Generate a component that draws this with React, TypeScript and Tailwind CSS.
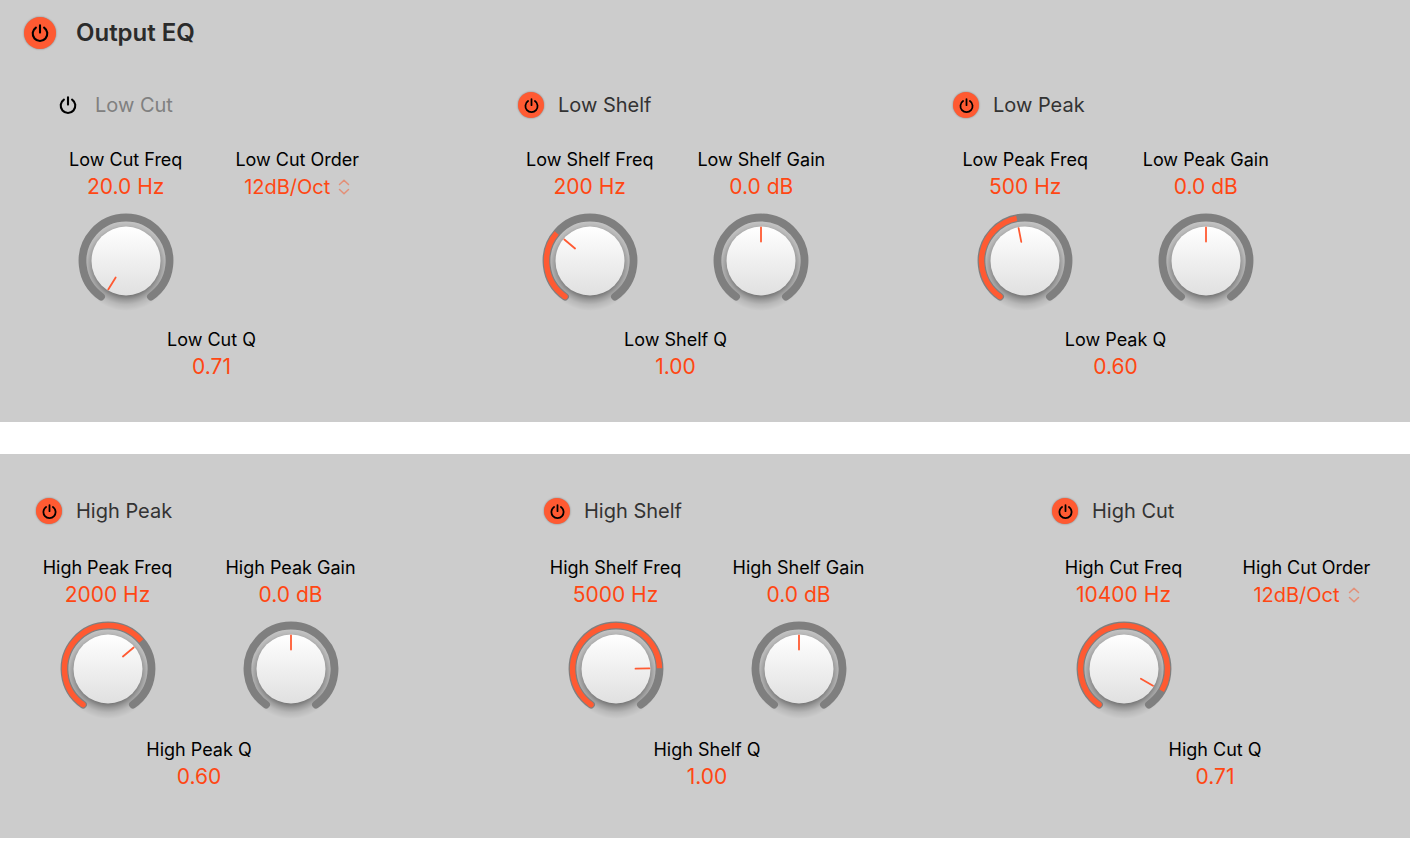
import React, { useState } from 'react';
import clsx from 'clsx';

type KnobParam = { kind: 'knob'; label: string; value: string; angle: number };
type MenuParam = { kind: 'menu'; label: string; options: string[] };
type Param = KnobParam | MenuParam;

type Band = {
  name: string;
  on: boolean;
  params: Param[];
  q: string;
};

const LIMIT = 145;
const ORDERS = ['12dB/Oct', '24dB/Oct', '36dB/Oct'];

const knob = (label: string, value: string, angle: number): Param => ({ kind: 'knob', label, value, angle });
const menu = (label: string): Param => ({ kind: 'menu', label, options: ORDERS });

const lowBands: Band[] = [
  { name: 'Low Cut', on: false, params: [knob('Freq', '20.0 Hz', -148), menu('Order')], q: '0.71' },
  { name: 'Low Shelf', on: true, params: [knob('Freq', '200 Hz', -50), knob('Gain', '0.0 dB', 0)], q: '1.00' },
  { name: 'Low Peak', on: true, params: [knob('Freq', '500 Hz', -11), knob('Gain', '0.0 dB', 0)], q: '0.60' },
];

const highBands: Band[] = [
  { name: 'High Peak', on: true, params: [knob('Freq', '2000 Hz', 50), knob('Gain', '0.0 dB', 0)], q: '0.60' },
  { name: 'High Shelf', on: true, params: [knob('Freq', '5000 Hz', 89), knob('Gain', '0.0 dB', 0)], q: '1.00' },
  { name: 'High Cut', on: true, params: [knob('Freq', '10400 Hz', 120), menu('Order')], q: '0.71' },
];

// 0 degrees is straight up, positive is clockwise
const point = (deg: number, r: number) => {
  const a = (deg * Math.PI) / 180;
  return `${(48 + r * Math.sin(a)).toFixed(2)} ${(48 - r * Math.cos(a)).toFixed(2)}`;
};

const arc = (from: number, to: number, r: number) =>
  `M${point(from, r)}A${r} ${r} 0 ${to - from > 180 ? 1 : 0} 1 ${point(to, r)}`;

const PowerButton = ({ on, name, large, onClick }: { on: boolean; name: string; large?: boolean; onClick: () => void }) => (
  <button
    type="button"
    aria-label={name}
    aria-pressed={on}
    onClick={onClick}
    className={clsx(
      'flex shrink-0 items-center justify-center rounded-full text-black',
      large ? 'size-8' : 'size-[26px]',
      on && 'bg-[#ff5a32] shadow-[0_0_2px_rgba(0,0,0,0.4)]'
    )}
  >
    <svg
      viewBox="0 0 18 18"
      className={large || !on ? 'size-[18px]' : 'size-[15px]'}
      fill="none"
      stroke="currentColor"
      strokeWidth="2.1"
      strokeLinecap="round"
    >
      <path d="M9 1.3V8.6M4.9 3.6A7.3 7.3 0 1 0 13.1 3.6" />
    </svg>
  </button>
);

const Knob = ({ id, angle: initial, bipolar }: { id: string; angle: number; bipolar: boolean }) => {
  const [angle, setAngle] = useState(initial);
  const from = bipolar ? Math.min(0, angle) : -LIMIT;
  const to = bipolar ? Math.max(0, angle) : angle;

  return (
    <div className="relative size-24">
      <svg viewBox="0 0 96 96" className="size-24 overflow-visible">
        <defs>
          <linearGradient id={`${id}-face`} x1="0" y1="0" x2="0" y2="1">
            <stop offset="0" stopColor="#ffffff" />
            <stop offset="1" stopColor="#e0e0e0" />
          </linearGradient>
          <radialGradient id={`${id}-shade`} cx="48" cy="52" r="46" gradientUnits="userSpaceOnUse">
            <stop offset="0.66" stopColor="#000" stopOpacity="0.42" />
            <stop offset="0.76" stopColor="#000" stopOpacity="0.24" />
            <stop offset="0.86" stopColor="#000" stopOpacity="0.1" />
            <stop offset="1" stopColor="#000" stopOpacity="0" />
          </radialGradient>
        </defs>
        <circle cx="48" cy="52" r="46" fill={`url(#${id}-shade)`} />
        <path d={arc(-LIMIT, LIMIT, 43.5)} fill="none" stroke="#7f7f7f" strokeWidth="7.8" strokeLinecap="round" />
        {to > from && (
          <>
            <path d={arc(from, to, 43.5)} fill="none" stroke="#ff5a32" strokeWidth="5.4" />
            {!bipolar && (
              <path d={arc(-LIMIT, -LIMIT + 1, 43.5)} fill="none" stroke="#ff5a32" strokeWidth="5.4" strokeLinecap="round" />
            )}
          </>
        )}
        <circle cx="48" cy="48" r="34.5" fill={`url(#${id}-face)`} />
        <path d={`M${point(angle, 33.5)}L${point(angle, 19.5)}`} stroke="#ff5a32" strokeWidth="1.8" strokeLinecap="round" />
      </svg>
      <input
        id={id}
        type="range"
        min={-148}
        max={148}
        value={angle}
        onChange={(e) => setAngle(Number(e.target.value))}
        className="absolute inset-0 cursor-pointer opacity-0"
      />
    </div>
  );
};

const Menu = ({ id, options }: { id: string; options: string[] }) => (
  <div className="flex h-[30px] items-center gap-2 text-[#ff4713]">
    <select id={id} className="appearance-none bg-transparent text-xl leading-[30px] [field-sizing:content]">
      {options.map((o) => (
        <option key={o}>{o}</option>
      ))}
    </select>
    <svg viewBox="0 0 12 16" className="h-4 w-3 opacity-45" fill="none" stroke="currentColor" strokeWidth="1.5" strokeLinecap="round" strokeLinejoin="round">
      <path d="M1.5 5.5L6 1.2L10.5 5.5M1.5 10.5L6 14.8L10.5 10.5" />
    </svg>
  </div>
);

type BandPanelProps = { band: Band; className: string; headerClass: string; roomy?: boolean };

const BandPanel = ({ band, className, headerClass, roomy }: BandPanelProps) => {
  const [on, setOn] = useState(band.on);
  const base = band.name.toLowerCase().replace(' ', '-');

  return (
    <section className={className}>
      <div className={clsx('flex h-[26px] items-center gap-3.5', headerClass)}>
        <PowerButton on={on} name={band.name} onClick={() => setOn(!on)} />
        <h3 className={clsx('text-xl', on ? 'text-[#333333]' : 'text-[#808080]')}>{band.name}</h3>
      </div>
      <div className={clsx('grid grid-cols-2', roomy ? 'mt-8' : 'mt-[30px]')}>
        {band.params.map((p) => {
          const id = `${base}-${p.label.toLowerCase()}`;
          return (
            <div key={p.label} className="flex flex-col items-center">
              <label htmlFor={id} className="text-lg leading-6 whitespace-nowrap text-black">
                {band.name} {p.label}
              </label>
              {p.kind === 'menu' ? (
                <Menu id={id} options={p.options} />
              ) : (
                <>
                  <output htmlFor={id} className="mb-[11px] text-[21px] leading-[30px] text-[#ff4713]">
                    {p.value}
                  </output>
                  <Knob id={id} angle={p.angle} bipolar={p.label === 'Gain'} />
                </>
              )}
            </div>
          );
        })}
      </div>
      <div className={clsx('flex flex-col items-center', roomy ? 'mt-[21px]' : 'mt-[19px]')}>
        <span className="text-lg leading-6 text-black">{band.name} Q</span>
        <span className="text-[21px] leading-[30px] text-[#ff4713]">{band.q}</span>
      </div>
    </section>
  );
};

const App = () => {
  const [on, setOn] = useState(true);

  return (
    <main className="bg-white font-['Inter',sans-serif]">
      <div className="bg-[#cccccc] pb-10">
        <header className="flex items-center gap-5 pt-[17px] pl-6">
          <PowerButton large on={on} name="Output EQ" onClick={() => setOn(!on)} />
          <h2 className="text-2xl leading-8 font-semibold text-[#2b2b2b]">Output EQ</h2>
        </header>
        <div className="mt-[43px] grid grid-cols-[464fr_431fr_475fr] pl-10">
          <BandPanel band={lowBands[0]} className="w-[343px]" headerClass="pl-[15px]" />
          <BandPanel band={lowBands[1]} className="w-[343px]" headerClass="pl-3.5" />
          <BandPanel band={lowBands[2]} className="w-[361px]" headerClass="pl-[18px]" />
        </div>
      </div>
      <div className="mt-8 flex justify-between bg-[#cccccc] pt-11 pr-3 pb-[46px] pl-4">
        {highBands.map((band) => (
          <BandPanel key={band.name} band={band} className="w-[366px]" headerClass="pl-5" roomy />
        ))}
      </div>
    </main>
  );
};

export default App;
